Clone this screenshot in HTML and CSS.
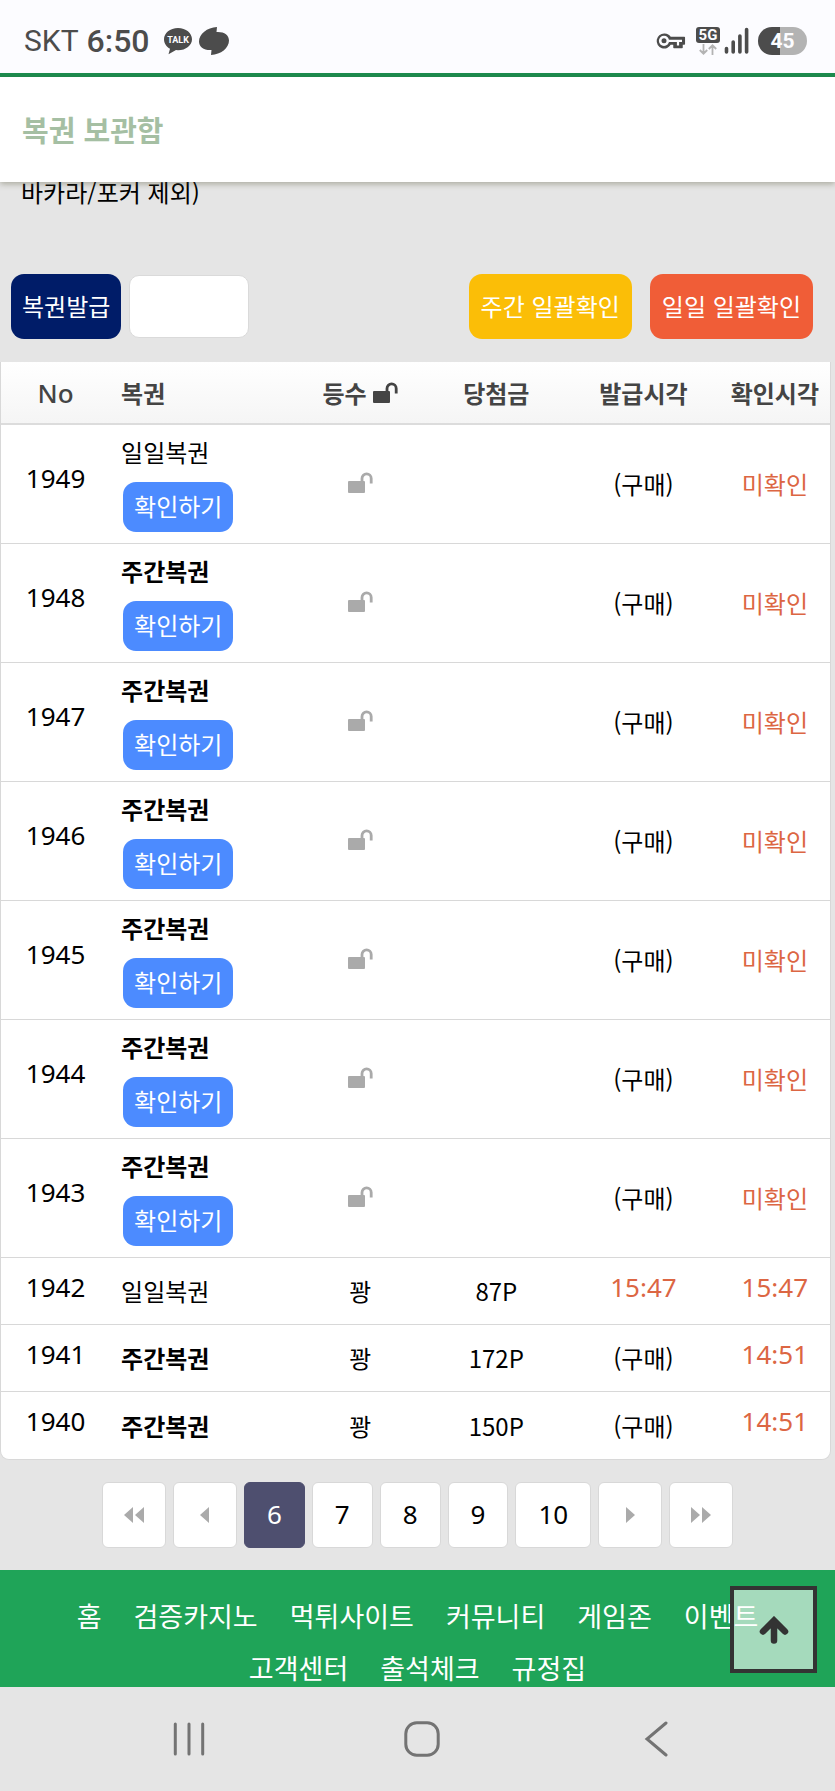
FILE: index.html
```html
<!DOCTYPE html>
<html lang="ko">
<head>
    <meta charset="UTF-8">
    <meta name="viewport" content="width=device-width, initial-scale=1.0">
    <title>복권 보관함</title>
    <link rel="stylesheet" href="styles.css">
</head>
<body>
    <!-- lock icon used in the table -->
    <svg class="sprite" aria-hidden="true">
        <symbol id="unlock" viewBox="0 0 25 21">
            <rect x="0" y="9" width="17" height="12" rx="1" fill="currentColor"/>
            <path d="M14 10V6.4a4.6 4.6 0 0 1 9.2 0V11.4" fill="none" stroke="currentColor" stroke-width="2.8"/>
        </symbol>
    </svg>

    <div class="status-bar">
        <div class="status-left">
            <span class="carrier">SKT</span>
            <span class="clock">6:50</span>
            <svg class="talk" width="30" height="28" viewBox="0 0 30 28">
                <path d="M15 1C7 1 1 6 1 12.3c0 4 2.400 7.500 6 9.500L5.500 27.300l7.500-4.200 2 .1c8 0 14-5 14-11S23 1 15 1z" fill="#4c4c4c"/>
                <text x="15" y="16" text-anchor="middle">TALK</text>
            </svg>
            <svg width="32" height="30" viewBox="0 0 32 30">
                <path d="M19 1L18.500 6C26 5.500 31 9 31 14.500 31 22 23 28.500 13 29L13.500 24C6 24.500 1 21 1 15.500 1 8 9 1.500 19 1z" fill="#4c4c4c"/>
            </svg>
        </div>
        <div class="status-right">
            <svg width="30" height="18" viewBox="0 0 30 18">
                <path d="M8.300 2.200a6.800 6.800 0 1 0 6 9.800h3.700v3.600h8V12h2.300V5.400H14.300a6.800 6.800 0 0 0-6-3.200z" fill="#4c4c4c" stroke="#4c4c4c" stroke-width="1.500" stroke-linejoin="round"/>
                <circle cx="8" cy="8.800" r="3.800" fill="#4c4c4c" stroke="#fcfcff" stroke-width="2.600"/>
                <path d="M12.500 8.800H26M22 9v4.500" fill="none" stroke="#fcfcff" stroke-width="2.200"/>
            </svg>
            <span class="network">
                <span class="badge-5g">5G</span>
                <svg width="18" height="11" viewBox="0 0 18 11">
                    <path d="M4.500 0v9.500M.8 6l3.700 3.700L8.200 6M13.500 11V1.500M9.800 5l3.700-3.700L17.200 5" fill="none" stroke="#b3b3b3" stroke-width="1.800"/>
                </svg>
            </span>
            <svg width="25" height="27" viewBox="0 0 25 27">
                <path d="M2.500 21.500v3.500M9.200 15v10M15.900 9v16M22.600 2.500V25" stroke="#4c4c4c" stroke-width="3.600" stroke-linecap="round"/>
            </svg>
            <span class="battery">45</span>
        </div>
    </div>

    <header class="page-header">
        <h1>복권 보관함</h1>
    </header>

    <main>
        <p class="notice">바카라/포커 제외)</p>

        <div class="toolbar">
            <button type="button" class="btn btn-issue">복권발급</button>
            <input type="text" class="issue-count" aria-label="발급 수량">
            <div class="toolbar-right">
                <button type="button" class="btn btn-weekly">주간 일괄확인</button>
                <button type="button" class="btn btn-daily">일일 일괄확인</button>
            </div>
        </div>

        <table class="lottery">
            <colgroup>
                <col class="col-no">
                <col class="col-name">
                <col class="col-rank">
                <col class="col-prize">
                <col class="col-issued">
                <col class="col-checked">
            </colgroup>
            <thead>
                <tr>
                    <th class="no">No</th>
                    <th class="name">복권</th>
                    <th>등수 <svg class="lock"><use href="#unlock"/></svg></th>
                    <th>당첨금</th>
                    <th>발급시각</th>
                    <th>확인시각</th>
                </tr>
            </thead>
            <tbody>
                <tr class="pending">
                    <td class="num">1949</td>
                    <td class="name">일일복권<button type="button" class="check">확인하기</button></td>
                    <td><svg class="lock"><use href="#unlock"/></svg></td>
                    <td></td>
                    <td>(구매)</td>
                    <td class="red">미확인</td>
                </tr>
                <tr class="pending">
                    <td class="num">1948</td>
                    <td class="name"><b>주간복권</b><button type="button" class="check">확인하기</button></td>
                    <td><svg class="lock"><use href="#unlock"/></svg></td>
                    <td></td>
                    <td>(구매)</td>
                    <td class="red">미확인</td>
                </tr>
                <tr class="pending">
                    <td class="num">1947</td>
                    <td class="name"><b>주간복권</b><button type="button" class="check">확인하기</button></td>
                    <td><svg class="lock"><use href="#unlock"/></svg></td>
                    <td></td>
                    <td>(구매)</td>
                    <td class="red">미확인</td>
                </tr>
                <tr class="pending">
                    <td class="num">1946</td>
                    <td class="name"><b>주간복권</b><button type="button" class="check">확인하기</button></td>
                    <td><svg class="lock"><use href="#unlock"/></svg></td>
                    <td></td>
                    <td>(구매)</td>
                    <td class="red">미확인</td>
                </tr>
                <tr class="pending">
                    <td class="num">1945</td>
                    <td class="name"><b>주간복권</b><button type="button" class="check">확인하기</button></td>
                    <td><svg class="lock"><use href="#unlock"/></svg></td>
                    <td></td>
                    <td>(구매)</td>
                    <td class="red">미확인</td>
                </tr>
                <tr class="pending">
                    <td class="num">1944</td>
                    <td class="name"><b>주간복권</b><button type="button" class="check">확인하기</button></td>
                    <td><svg class="lock"><use href="#unlock"/></svg></td>
                    <td></td>
                    <td>(구매)</td>
                    <td class="red">미확인</td>
                </tr>
                <tr class="pending">
                    <td class="num">1943</td>
                    <td class="name"><b>주간복권</b><button type="button" class="check">확인하기</button></td>
                    <td><svg class="lock"><use href="#unlock"/></svg></td>
                    <td></td>
                    <td>(구매)</td>
                    <td class="red">미확인</td>
                </tr>
                <tr>
                    <td class="num">1942</td>
                    <td class="name">일일복권</td>
                    <td>꽝</td>
                    <td>87P</td>
                    <td class="num red">15:47</td>
                    <td class="num red">15:47</td>
                </tr>
                <tr>
                    <td class="num">1941</td>
                    <td class="name"><b>주간복권</b></td>
                    <td>꽝</td>
                    <td>172P</td>
                    <td>(구매)</td>
                    <td class="num red">14:51</td>
                </tr>
                <tr>
                    <td class="num">1940</td>
                    <td class="name"><b>주간복권</b></td>
                    <td>꽝</td>
                    <td>150P</td>
                    <td>(구매)</td>
                    <td class="num red">14:51</td>
                </tr>
            </tbody>
        </table>

        <nav class="pagination" aria-label="페이지">
            <a href="#" class="arrow" aria-label="처음"><svg width="20" height="16" viewBox="0 0 20 16"><path d="M9 0v16L0 8zM20 0v16L11 8z"/></svg></a>
            <a href="#" class="arrow" aria-label="이전"><svg width="9" height="16" viewBox="0 0 9 16"><path d="M9 0v16L0 8z"/></svg></a>
            <a href="#" class="active" aria-current="page">6</a>
            <a href="#">7</a>
            <a href="#">8</a>
            <a href="#">9</a>
            <a href="#">10</a>
            <a href="#" class="arrow" aria-label="다음"><svg width="9" height="16" viewBox="0 0 9 16"><path d="M0 0v16l9-8z"/></svg></a>
            <a href="#" class="arrow" aria-label="마지막"><svg width="20" height="16" viewBox="0 0 20 16"><path d="M0 0v16l9-8zM11 0v16l9-8z"/></svg></a>
        </nav>
    </main>

    <footer class="footer">
        <nav class="footer-menu">
            <a href="#">홈</a>
            <a href="#">검증카지노</a>
            <a href="#">먹튀사이트</a>
            <a href="#">커뮤니티</a>
            <a href="#">게임존</a>
            <a href="#">이벤트</a>
            <a href="#">고객센터</a>
            <a href="#">출석체크</a>
            <a href="#">규정집</a>
        </nav>
        <button type="button" class="to-top" aria-label="맨 위로">
            <svg width="30" height="28" viewBox="0 0 30 28">
                <path d="M4 15.500L15 4.500l11 11M15 6v18.500" fill="none" stroke="#333" stroke-width="6.500" stroke-linecap="round"/>
            </svg>
        </button>
    </footer>

    <div class="system-nav">
        <button type="button" aria-label="최근 앱">
            <svg width="36" height="36" viewBox="0 0 36 36"><path d="M4.300 3v30M18 3v30M31.700 3v30"/></svg>
        </button>
        <button type="button" aria-label="홈 화면">
            <svg width="36" height="36" viewBox="0 0 36 36"><rect x="1.800" y="1.800" width="32.400" height="32.400" rx="11"/></svg>
        </button>
        <button type="button" aria-label="뒤로">
            <svg width="36" height="36" viewBox="0 0 36 36"><path d="M28 2L9 18l19 16"/></svg>
        </button>
    </div>
</body>
</html>
```

FILE: styles.css
```css
* {
    box-sizing: border-box;
}

body {
    margin: 0;
    font-family: "Noto Sans CJK KR", sans-serif;
    font-size: 24px;
    color: #000;
    background-color: #e5e5e5;
}

button, input {
    font: inherit;
    margin: 0;
}

a {
    text-decoration: none;
    color: inherit;
}

svg {
    display: block;
}

.sprite {
    position: absolute;
    width: 0;
    height: 0;
}

/* phone status bar */
.status-bar {
    display: flex;
    justify-content: space-between;
    align-items: center;
    height: 77px;
    padding: 8px 28px 0 24px;
    background-color: #fcfcff;
    border-bottom: 4px solid #1b8c4e;
    color: #4c4c4c;
    font-family: Roboto, sans-serif;
}

.status-left, .status-right {
    display: flex;
    align-items: center;
}

.carrier {
    font-size: 30px;
    margin-right: 8px;
}

.clock {
    font-size: 32px;
    font-weight: 500;
    margin-right: 13px;
}

.talk {
    margin-right: 5px;
}

.talk text {
    font-family: Roboto, sans-serif;
    font-size: 9px;
    font-weight: bold;
    fill: #fcfcff;
}

.network {
    display: flex;
    flex-direction: column;
    align-items: center;
    gap: 1px;
    margin: 0 4px 0 10px;
}

.badge-5g {
    width: 24px;
    border-radius: 3px;
    background-color: #4c4c4c;
    color: #fcfcff;
    font-size: 15px;
    font-weight: bold;
    line-height: 16px;
    text-align: center;
}

.battery {
    width: 49px;
    margin-left: 9px;
    border-radius: 14px;
    background: linear-gradient(to right, #4c4c4c 45%, #b3b3b3 45%);
    color: #fcfcff;
    font-size: 21px;
    font-weight: bold;
    line-height: 28px;
    text-align: center;
}

/* title */
.page-header {
    position: relative;
    padding: 32px 22px 33px;
    background-color: #fff;
    box-shadow: 0 2px 6px rgba(80, 80, 50, 0.4);
}

.page-header h1 {
    margin: 0;
    font-size: 29px;
    line-height: 40px;
    color: #a5bfa3;
}

.notice {
    margin: 0;
    padding: 0 21px;
    line-height: 20px;
}

/* toolbar */
.toolbar {
    display: flex;
    align-items: center;
    gap: 8px;
    margin-top: 72px;
    padding: 0 22px 0 11px;
}

.toolbar-right {
    display: flex;
    gap: 18px;
    margin-left: auto;
}

.btn {
    height: 65px;
    padding: 0 12px 2px;
    border: none;
    border-radius: 13px;
    color: #fff;
    white-space: nowrap;
}

.btn-issue {
    padding: 0 11px 2px;
    background-color: #001c68;
}

.btn-weekly {
    background-color: #fbbe07;
}

.btn-daily {
    background-color: #f05d37;
}

.issue-count {
    width: 120px;
    height: 63px;
    padding: 0 12px;
    border: 1px solid #dadada;
    border-radius: 10px;
    background-color: #fff;
}

/* table */
.lottery {
    width: calc(100% - 4px);
    margin-top: 23px;
    border: 1px solid #d8d8d8;
    border-top: none;
    border-radius: 0 0 9px 9px;
    border-collapse: separate;
    border-spacing: 0;
    table-layout: fixed;
    background-color: #fff;
    line-height: 36px;
}

.col-no { width: 13.4%; }
.col-name { width: 22.1%; }
.col-rank { width: 15.7%; }
.col-prize { width: 17.1%; }
.col-issued { width: 18.4%; }
.col-checked { width: 13.3%; }

.lottery th {
    height: 63px;
    padding: 0;
    border-bottom: 2px solid #dcdcdc;
    background: linear-gradient(#fff, #f5f5f5);
    color: #444;
    white-space: nowrap;
}

.lottery th.no {
    font-family: "Noto Sans", sans-serif;
    font-size: 26px;
    font-weight: 500;
}

.lottery td {
    height: 67px;
    padding: 0;
    border-bottom: 1px solid #d8d8d8;
    text-align: center;
}

.lottery tr:last-child td {
    border-bottom: none;
}

.lottery .name {
    padding-left: 9px;
    text-align: left;
}

.lottery .pending .name {
    padding-top: 9px;
    padding-bottom: 11px;
}

.lottery .num {
    padding-bottom: 9px;
    font-family: "Noto Sans", sans-serif;
    font-size: 26px;
}

.lottery .pending .num {
    padding-bottom: 12px;
}

.lottery .num:first-child,
.lottery th.no {
    padding-right: 2px;
}

.lottery .red {
    color: #dc6643;
}

.lock {
    display: inline-block;
    width: 25px;
    height: 21px;
}

td .lock {
    display: block;
    margin: 0 auto 4px;
    color: #aaa;
}

.check {
    display: block;
    height: 50px;
    margin: 12px 0 0 2px;
    padding: 0 11px 2px;
    border: none;
    border-radius: 13px;
    background-color: #4c8bff;
    color: #fff;
}

/* pagination */
.pagination {
    display: flex;
    justify-content: center;
    gap: 7px;
    padding: 22px 0;
    font-family: "Noto Sans", sans-serif;
    font-size: 26px;
}

.pagination a {
    display: flex;
    align-items: center;
    justify-content: center;
    height: 66px;
    padding: 0 22px 3px;
    border: 1px solid #d8d8d8;
    border-radius: 6px;
    background-color: #fff;
}

.pagination .arrow {
    width: 64px;
    padding: 0;
}

.pagination svg {
    fill: #aaa;
}

.pagination .active {
    border-color: #4e4f6f;
    background-color: #4e4f6f;
    color: #fff;
}

/* footer */
.footer {
    position: relative;
    padding: 30px 40px 3px;
    background-color: #1fa458;
}

.footer-menu {
    display: flex;
    flex-wrap: wrap;
    justify-content: center;
    gap: 20px 32px;
    color: #fff;
    font-size: 27px;
    line-height: 32px;
}

.to-top {
    position: absolute;
    right: 18px;
    bottom: 14px;
    display: flex;
    align-items: center;
    justify-content: center;
    width: 87px;
    height: 87px;
    padding: 0;
    border: 4px solid #333;
    background-color: rgba(255, 255, 255, 0.6);
}

/* phone navigation keys */
.system-nav {
    display: flex;
    justify-content: space-around;
    align-items: center;
    height: 104px;
    padding: 0 62px 0 72px;
}

.system-nav button {
    padding: 0;
    border: none;
    background: none;
}

.system-nav svg {
    fill: none;
    stroke: #737373;
    stroke-width: 3;
    stroke-linecap: round;
}
```
